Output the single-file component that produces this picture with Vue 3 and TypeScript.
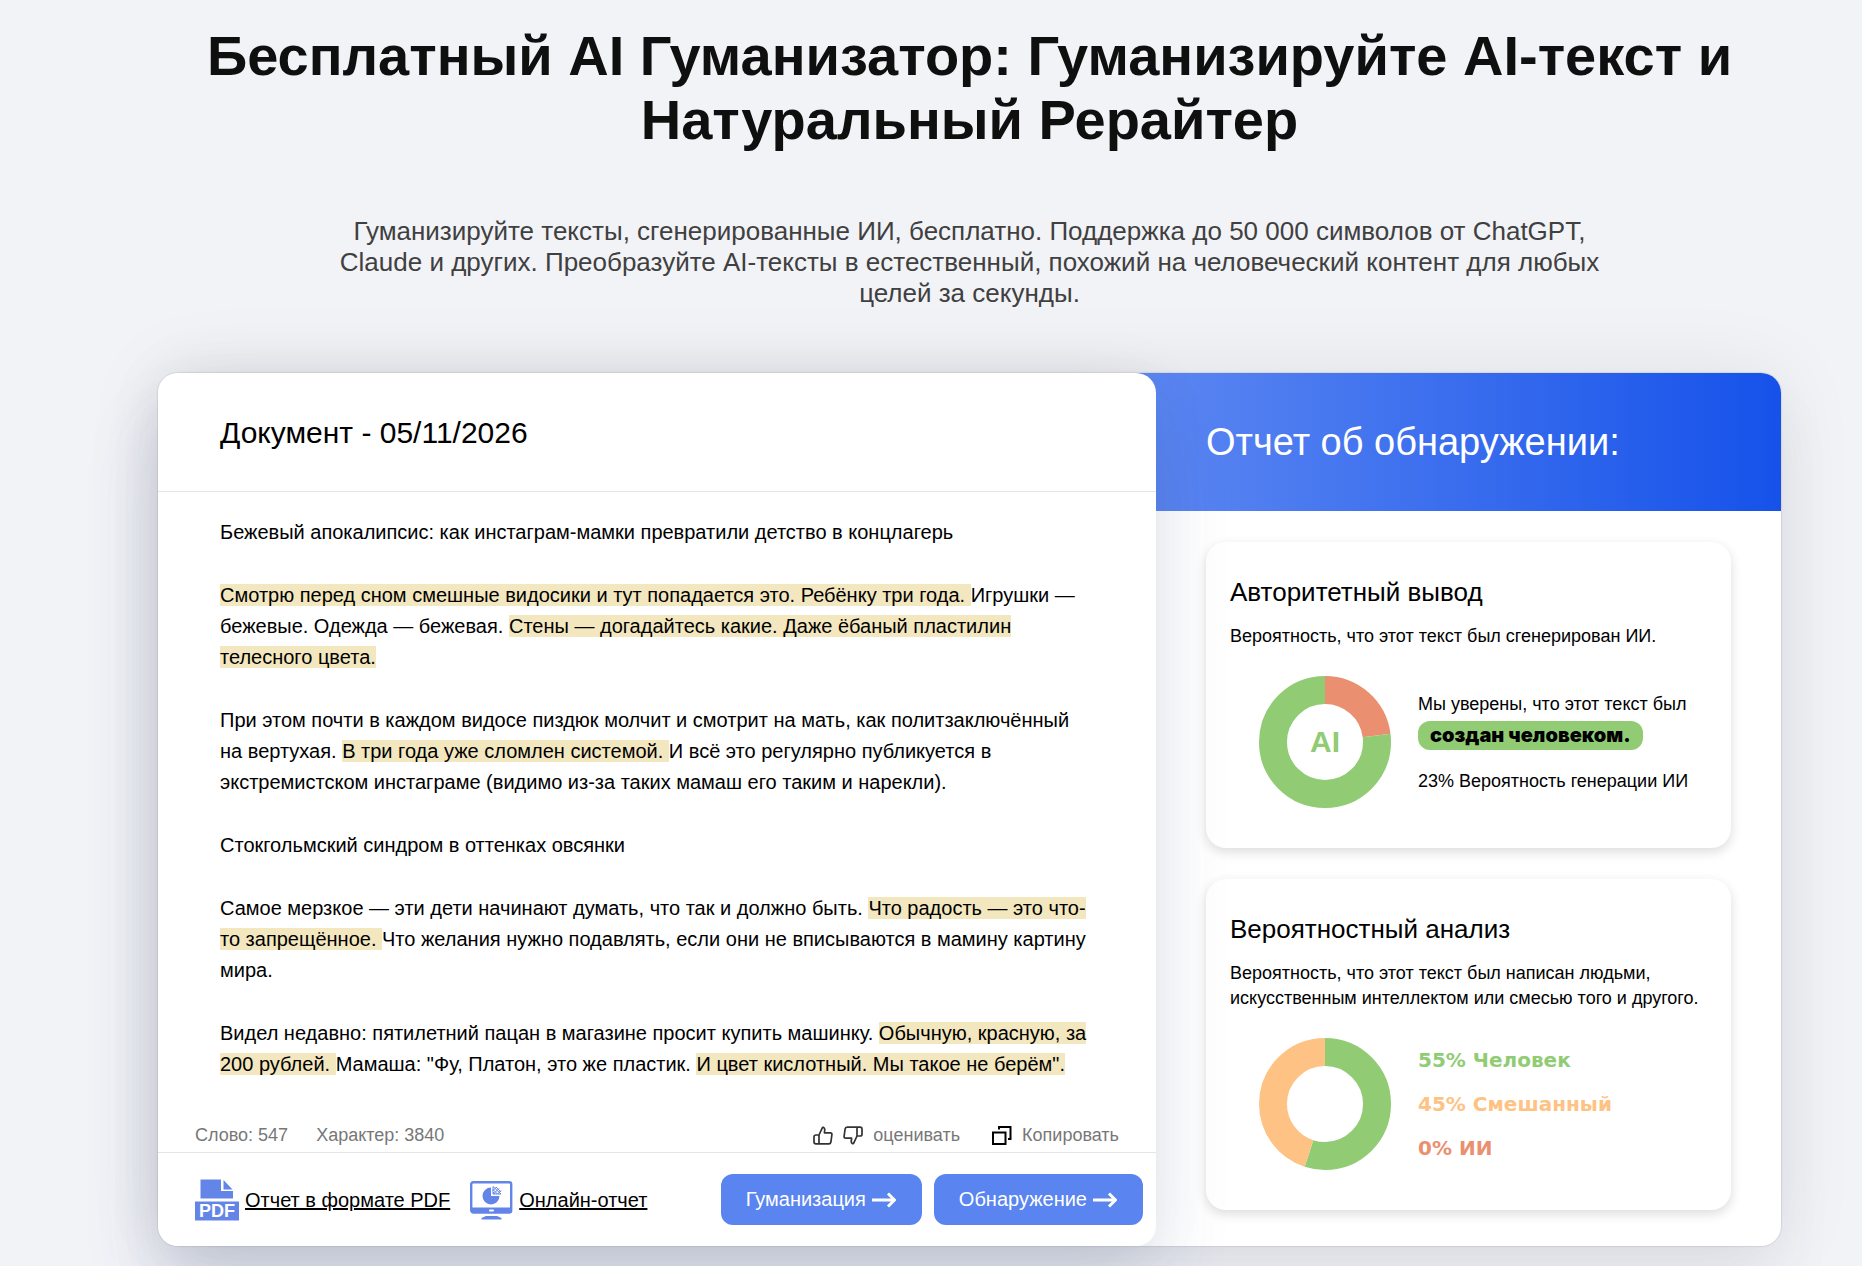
<script setup lang="ts">
interface Segment {
  text: string
  marked?: boolean
}

interface Slice {
  label: string
  value: number
  color: string
}

const green = '#91cc75'
const orange = '#fec384'
const red = '#ea8f70'

const paragraphs: Segment[][] = [
  [{ text: 'Бежевый апокалипсис: как инстаграм-мамки превратили детство в концлагерь' }],
  [
    { text: 'Смотрю перед сном смешные видосики и тут попадается это. Ребёнку три года. ', marked: true },
    { text: 'Игрушки — бежевые. Одежда — бежевая. ' },
    { text: 'Стены — догадайтесь какие. Даже ёбаный пластилин телесного цвета.', marked: true },
  ],
  [
    { text: 'При этом почти в каждом видосе пиздюк молчит и смотрит на мать, как политзаключённый на вертухая. ' },
    { text: 'В три года уже сломлен системой. ', marked: true },
    { text: 'И всё это регулярно публикуется в экстремистском инстаграме (видимо из-за таких мамаш его таким и нарекли).' },
  ],
  [{ text: 'Стокгольмский синдром в оттенках овсянки' }],
  [
    { text: 'Самое мерзкое — эти дети начинают думать, что так и должно быть. ' },
    { text: 'Что радость — это что-то запрещённое. ', marked: true },
    { text: 'Что желания нужно подавлять, если они не вписываются в мамину картину мира.' },
  ],
  [
    { text: 'Видел недавно: пятилетний пацан в магазине просит купить машинку. ' },
    { text: 'Обычную, красную, за 200 рублей. ', marked: true },
    { text: 'Мамаша: "Фу, Платон, это же пластик. ' },
    { text: 'И цвет кислотный. Мы такое не берём".', marked: true },
  ],
]

const verdict: Slice[] = [
  { label: 'ИИ', value: 23, color: red },
  { label: 'Человек', value: 77, color: green },
]

const analysis: Slice[] = [
  { label: 'Человек', value: 55, color: green },
  { label: 'Смешанный', value: 45, color: orange },
  { label: 'ИИ', value: 0, color: red },
]

const startOf = (slices: Slice[], index: number): number =>
  slices.slice(0, index).reduce((sum, slice) => sum + slice.value, 0)
</script>

<template>
  <main class="page">
    <h1 class="title">Бесплатный AI Гуманизатор: Гуманизируйте AI-текст и Натуральный Рерайтер</h1>
    <p class="lead">
      Гуманизируйте тексты, сгенерированные ИИ, бесплатно. Поддержка до 50 000 символов от ChatGPT, Claude и других.
      Преобразуйте AI-тексты в естественный, похожий на человеческий контент для любых целей за секунды.
    </p>

    <div class="panel">
      <section class="document">
        <header class="document-head">
          <h2>Документ - 05/11/2026</h2>
        </header>

        <article class="document-body">
          <p v-for="(paragraph, i) in paragraphs" :key="i">
            <span v-for="(segment, j) in paragraph" :key="j" :class="{ marked: segment.marked }">{{ segment.text }}</span>
          </p>
        </article>

        <div class="stats">
          <span class="words">Слово: 547</span>
          <span>Характер: 3840</span>
          <div class="rate">
            <button type="button" class="plain" aria-label="Нравится">
              <svg width="20" height="19" viewBox="0 0 20 19" fill="none" stroke="#333" stroke-width="1.7" stroke-linejoin="round">
                <path d="M6 9 9.3 1.8Q9.7 1 10.6 1.4 12 2.2 11.7 4L11.4 6.8H17.4Q19.1 7 18.9 8.6L17.9 16Q17.6 17.9 15.8 17.9H3Q1 17.8 1 16V10.8Q1 9 3 9H6V17.9" />
              </svg>
            </button>
            <button type="button" class="plain" aria-label="Не нравится">
              <svg width="20" height="19" viewBox="0 0 20 19" fill="none" stroke="#333" stroke-width="1.7" stroke-linejoin="round">
                <path d="M14 10 10.7 17.2Q10.3 18 9.4 17.6 8 16.8 8.3 15L8.6 12.2H2.6Q.9 12 1.1 10.4L2.1 3Q2.4 1.1 4.2 1.1H17Q19 1.2 19 3V8.2Q19 10 17 10H14V1.1" />
              </svg>
            </button>
            <span>оценивать</span>
          </div>
          <button type="button" class="plain copy">
            <svg width="20" height="19" viewBox="0 0 20 19" fill="none" stroke="#000" stroke-width="2">
              <path d="M1 6.500H13.500V18H1zM7 3.500V1H18.500V13H16" />
            </svg>
            <span>Копировать</span>
          </button>
        </div>

        <footer class="actions">
          <a href="#pdf" class="report">
            <svg width="44" height="42" viewBox="0 0 44 42" aria-hidden="true">
              <path fill="#6485e8" d="M5.500.500H26V12H38V19.500H5.500zM28.500 1 37.500 10.500H28.500zM0 22.500H44V41.500H0z" />
              <text x="22" y="38" text-anchor="middle" fill="#fff" font-size="18" font-weight="700">PDF</text>
            </svg>
            <span>Отчет в формате PDF</span>
          </a>
          <a href="#online" class="report">
            <svg width="43" height="40" viewBox="0 0 43 40" aria-hidden="true">
              <rect x="1.200" y="2.200" width="40" height="30" rx="2" fill="none" stroke="#6485e8" stroke-width="2.400" />
              <path fill="#6485e8" d="M1 27.500H42V31Q42 33.500 39.500 33.500H3.500Q1 33.500 1 31zM16 36H27L31.500 38V39.500H11.500V38z" />
              <path fill="#6485e8" d="M21 7.500A8.500 8.500 0 1 0 29.500 16H21z" />
              <path fill="none" stroke="#6485e8" stroke-width="1" d="M23 14V6.500L31 14zM23 9.500 27.500 14M23 12 25 14M26 7 31 12M29 8.500 24 13.500M26.500 7 23 10.500M31 10.500 27.500 14" />
              <rect x="19" y="29.500" width="5" height="2" rx="1" fill="#fff" />
            </svg>
            <span>Онлайн-отчет</span>
          </a>
          <div class="buttons">
            <button v-for="name in ['Гуманизация', 'Обнаружение']" :key="name" type="button" class="primary">
              {{ name }}
              <svg width="24" height="16" viewBox="0 0 24 16" fill="none" stroke="#fff" stroke-width="3" aria-hidden="true">
                <path d="M0 8H22M16 1.500 22.500 8 16 14.500" />
              </svg>
            </button>
          </div>
        </footer>
      </section>

      <section class="report-pane">
        <header class="report-head">
          <h2>Отчет об обнаружении:</h2>
        </header>

        <div class="cards">
          <section class="card">
            <h3>Авторитетный вывод</h3>
            <p class="note">Вероятность, что этот текст был сгенерирован ИИ.</p>
            <div class="chart-row">
              <svg class="donut" width="132" height="132" viewBox="0 0 132 132">
                <circle
                  v-for="(slice, i) in verdict"
                  :key="slice.label"
                  cx="66"
                  cy="66"
                  r="52"
                  pathLength="100"
                  fill="none"
                  stroke-width="28"
                  :stroke="slice.color"
                  :stroke-dasharray="`${slice.value} ${100 - slice.value}`"
                  :stroke-dashoffset="-startOf(verdict, i)"
                  transform="rotate(-90 66 66)"
                />
                <text x="66" y="76" text-anchor="middle" :fill="green" font-size="30" font-weight="700">AI</text>
              </svg>
              <div class="verdict">
                <p>Мы уверены, что этот текст был</p>
                <strong class="pill">создан человеком.</strong>
                <p class="chance">23% Вероятность генерации ИИ</p>
              </div>
            </div>
          </section>

          <section class="card">
            <h3>Вероятностный анализ</h3>
            <p class="note">Вероятность, что этот текст был написан людьми, искусственным интеллектом или смесью того и другого.</p>
            <div class="chart-row">
              <svg class="donut" width="132" height="132" viewBox="0 0 132 132">
                <template v-for="(slice, i) in analysis" :key="slice.label">
                  <circle
                    v-if="slice.value > 0"
                    cx="66"
                    cy="66"
                    r="52"
                    pathLength="100"
                    fill="none"
                    stroke-width="28"
                    :stroke="slice.color"
                    :stroke-dasharray="`${slice.value} ${100 - slice.value}`"
                    :stroke-dashoffset="-startOf(analysis, i)"
                    transform="rotate(-90 66 66)"
                  />
                </template>
              </svg>
              <ul class="legend">
                <li v-for="slice in analysis" :key="slice.label" :style="{ color: slice.color }">
                  {{ slice.value }}% {{ slice.label }}
                </li>
              </ul>
            </div>
          </section>
        </div>
      </section>
    </div>
  </main>
</template>

<style>
body {
  background: #f2f3f7;
}
</style>

<style scoped>
* {
  box-sizing: border-box;
}

.page {
  padding: 24px 81px 20px 158px;
  font-family: 'Liberation Sans', Arial, sans-serif;
  color: #000;
  overflow: hidden;
}

h1,
h2,
h3,
p,
ul {
  margin: 0;
  padding: 0;
  font-weight: 400;
}

button {
  font-family: inherit;
  border: 0;
  cursor: pointer;
}

.title {
  font-size: 56px;
  line-height: 64px;
  font-weight: 700;
  text-align: center;
  color: #0f0f0f;
}

.lead {
  max-width: 1300px;
  margin: 64px auto;
  font-size: 26px;
  line-height: 31px;
  text-align: center;
  color: #404040;
}

.panel {
  display: flex;
  border-radius: 20px;
  background: #fff;
  box-shadow:
    0 0 1px 1px rgba(0, 0, 0, 0.08),
    0 0 80px rgba(0, 0, 0, 0.08),
    0 40px 60px rgba(50, 60, 110, 0.06);
}

.document {
  position: relative;
  flex: 998 1 0;
  min-width: 0;
  display: flex;
  flex-direction: column;
  border-radius: 20px;
  background: #fff;
  box-shadow:
    0 0 60px rgba(0, 0, 0, 0.06),
    0 50px 80px rgba(50, 70, 140, 0.12);
}

.document-head {
  padding: 43px 62px 42px;
  border-bottom: 1px solid #e5e5e5;
}

.document-head h2 {
  font-size: 30px;
  line-height: 33px;
}

.document-body {
  display: flex;
  flex-direction: column;
  gap: 32px;
  padding: 25px 66px 42px 62px;
  font-size: 20px;
  line-height: 31px;
}

.marked {
  background: #f3e7bf;
}

.stats {
  display: flex;
  align-items: center;
  margin-top: auto;
  padding: 0 37px 6px;
  border-bottom: 1px solid #e5e5e5;
  font-size: 18px;
  line-height: 22px;
  color: #777;
}

.words {
  margin-right: 28px;
}

.rate {
  display: flex;
  align-items: center;
  gap: 10px;
  margin-left: auto;
}

.plain {
  display: flex;
  align-items: center;
  padding: 0;
  background: none;
  font-size: 18px;
  line-height: 22px;
  color: #777;
}

.copy {
  gap: 10px;
  margin-left: 32px;
}

.actions {
  display: flex;
  align-items: center;
  gap: 20px;
  padding: 21px 13px 21px 37px;
}

.report {
  display: flex;
  align-items: center;
  gap: 6px;
  font-size: 20px;
  line-height: 24px;
  color: #000;
}

.buttons {
  display: flex;
  gap: 12px;
  margin-left: auto;
}

.primary {
  display: flex;
  align-items: center;
  gap: 6px;
  height: 51px;
  padding: 0 26px 0 25px;
  border-radius: 12px;
  background: #5a84f0;
  font-size: 20px;
  color: #fff;
}

.report-pane {
  flex: 625 1 0;
  min-width: 0;
}

.report-head {
  margin-left: -20px;
  padding: 47px 20px 47px 70px;
  border-top-right-radius: 20px;
  background: linear-gradient(90deg, #5d88f2, #1652ea);
  color: #fff;
}

.report-head h2 {
  font-size: 38px;
  line-height: 44px;
}

.cards {
  display: flex;
  flex-direction: column;
  gap: 31px;
  padding: 31px 50px 36px;
}

.card {
  padding: 35px 24px 40px;
  border-radius: 20px;
  box-shadow: 0 4px 12px rgba(0, 0, 0, 0.14);
}

.card h3 {
  font-size: 26px;
  line-height: 30px;
}

.note {
  margin-top: 17px;
  font-size: 18px;
  line-height: 25px;
}

.chart-row {
  display: flex;
  align-items: center;
  gap: 27px;
  margin-top: 27px;
  padding-left: 29px;
}

.donut {
  flex: none;
}

.verdict {
  font-size: 18px;
  line-height: 24px;
}

.pill {
  display: inline-block;
  margin: 5px 0 19px;
  padding: 0 12px;
  border-radius: 12px;
  background: #91cc75;
  font-family: Inter, 'Liberation Sans', sans-serif;
  font-size: 20px;
  line-height: 29px;
  font-weight: 900;
}

.legend {
  display: flex;
  flex-direction: column;
  gap: 20px;
  list-style: none;
  font-family: 'DejaVu Sans', 'Liberation Sans', sans-serif;
  font-size: 20px;
  line-height: 24px;
}

.legend li {
  font-weight: 900;
}
</style>
